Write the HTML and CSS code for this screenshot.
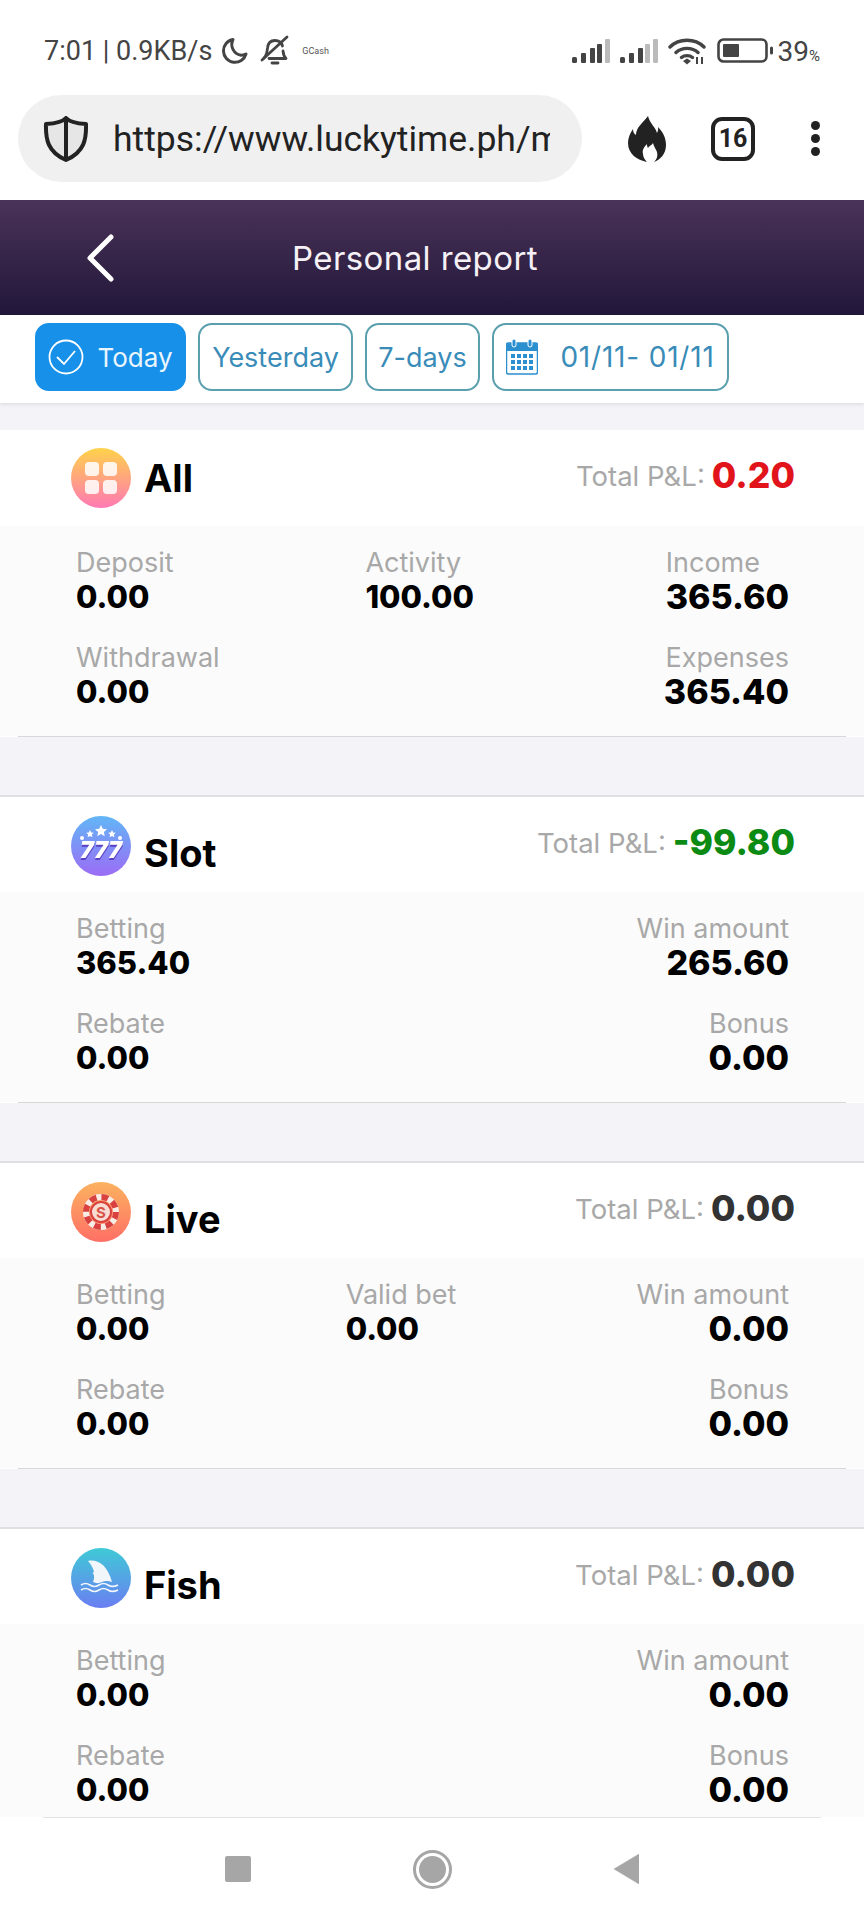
FILE: index.html
```html
<!DOCTYPE html>
<html>

<head>
    <meta charset="UTF-8" />
    <title>Personal report</title>
    <link rel="stylesheet" href="styles.css">
</head>

<body>
    <div class="statusbar">
        <div class="status-left">
            <span class="status-text">7:01 | 0.9KB/s</span>
            <svg class="moon" width="28" height="28" viewBox="0 0 28 28"><path d="M13 2.500a11.500 11.500 0 1 0 13 14.500c-2 1-3.500 1.300-5 1.300A11 11 0 0 1 13 2.500z" fill="none" stroke="#444" stroke-width="3" stroke-linejoin="round"/></svg>
            <svg class="bell" width="30" height="32" viewBox="0 0 30 32"><path d="M4 23c3-3 3-6 3.500-10C8 8 11 5.500 15 5.500s6.500 2 7.500 5.500M23 16c.3 3 1 5.500 3 7.500H9M12 28h6" fill="none" stroke="#444" stroke-width="2.800" stroke-linecap="round" stroke-linejoin="round"/><path d="M2 25L27 2" stroke="#444" stroke-width="2.800" stroke-linecap="round"/></svg>
            <span class="gcash">GCash</span>
        </div>
        <div class="status-right">
            <svg class="signal" width="38" height="24" viewBox="0 0 38 24"><rect x="0" y="18" width="5" height="6" rx="1.500" fill="#444"/><rect x="9" y="14" width="5" height="10" rx="1" fill="#444"/><rect x="18" y="9" width="5" height="15" rx="1" fill="#444"/><rect x="25" y="5" width="5" height="19" rx="1" fill="#444"/><rect x="33" y="0" width="5" height="24" rx="1" fill="#bbb"/></svg>
            <svg class="signal" width="38" height="24" viewBox="0 0 38 24"><rect x="0" y="18" width="5" height="6" rx="1.500" fill="#444"/><rect x="9" y="14" width="5" height="10" rx="1" fill="#444"/><rect x="18" y="9" width="5" height="15" rx="1" fill="#444"/><rect x="25" y="5" width="5" height="19" rx="1" fill="#bbb"/><rect x="33" y="0" width="5" height="24" rx="1" fill="#bbb"/></svg>
            <svg class="wifi" width="38" height="28" viewBox="0 0 38 28"><path d="M2 10C11 1 27 1 36 10M8 15.500c6-5.500 16-5.500 22 0M13.500 20.500c3-2.500 8-2.500 11 0" fill="none" stroke="#444" stroke-width="3.400" stroke-linecap="round"/><path d="M15 24l4-2.500 4 2.500-4 3.500z" fill="#444"/><path d="M29 20v7M34 20v7" stroke="#444" stroke-width="2"/></svg>
            <svg class="battery" width="60" height="26" viewBox="0 0 60 26"><rect x="1.500" y="1.500" width="48" height="22" rx="5" fill="none" stroke="#444" stroke-width="2.600"/><rect x="6" y="6" width="16" height="13" rx="1" fill="#444"/><rect x="53" y="8.500" width="3" height="8" rx="1.500" fill="#444"/></svg>
            <span class="status-text status-battery">39<span class="percent">%</span></span>
        </div>
    </div>

    <div class="browserbar">
        <div class="urlbox">
            <svg class="shield" width="46" height="46" viewBox="0 0 46 46"><path d="M23 2c3 3.500 10 5.500 20 6 .5 15-1.500 28-20 36C4.500 36 2.500 23 3 8c10-.5 17-2.500 20-6z" fill="#e6e6e6" stroke="#222" stroke-width="4" stroke-linejoin="round"/><path d="M23 3v40" stroke="#222" stroke-width="4"/></svg>
            <span class="url">https://www.luckytime.ph/m/report</span>
        </div>
        <svg class="flame" width="38" height="46" viewBox="0 0 38 46"><path d="M20 0c2 8 7 10 9 17 1-2 1.500-4 1-6 5 5 8 11 8 18 0 9-6 15-12 17 3-3 4-6 3-10-1-3-3-5-4-9-2 3-3 2-5 5-1-1-1-3-1-4-3 3-5 6-4 10 0 3 2 6 4 8C9 44 0 38 0 27c0-5 2-10 5-14 0 3 1 5 3 6C8 11 15 7 20 0z" fill="#222"/></svg>
        <div class="tabcount">16</div>
        <div class="menu-dots"><i></i><i></i><i></i></div>
    </div>

    <header class="topbar">
        <svg class="back" width="30" height="48" viewBox="0 0 30 48"><path d="M26 3L5 24l21 21" fill="none" stroke="#fff" stroke-width="5" stroke-linecap="round" stroke-linejoin="round"/></svg>
        <span class="topbar-title">Personal report</span>
    </header>

    <nav class="tabs">
        <div class="tab tab-today">
            <svg width="36" height="36" viewBox="0 0 36 36"><circle cx="18" cy="18" r="16.500" fill="none" stroke="#fff" stroke-width="1.800"/><path d="M9 18l7 7 11-13" fill="none" stroke="#fff" stroke-width="1.800"/></svg>
            <span>Today</span>
        </div>
        <div class="tab tab-yesterday">Yesterday</div>
        <div class="tab tab-week">7-days</div>
        <div class="tab tab-date">
            <svg width="32" height="36" viewBox="0 0 32 36"><rect x="0.500" y="4" width="31" height="31" rx="2" fill="#fff" stroke="#2b8fd0" stroke-width="1.500"/><path d="M1 6a2 2 0 0 1 2-2h26a2 2 0 0 1 2 2v6H1z" fill="#2b8fd0"/><rect x="6" y="0" width="4" height="8" rx="2" fill="#2b8fd0" stroke="#fff"/><rect x="22" y="0" width="4" height="8" rx="2" fill="#2b8fd0" stroke="#fff"/><g fill="#2b8fd0"><rect x="5" y="15" width="4" height="4"/><rect x="11" y="15" width="4" height="4"/><rect x="17" y="15" width="4" height="4"/><rect x="23" y="15" width="4" height="4"/><rect x="5" y="21" width="4" height="4"/><rect x="11" y="21" width="4" height="4"/><rect x="17" y="21" width="4" height="4"/><rect x="23" y="21" width="4" height="4"/><rect x="5" y="27" width="4" height="4"/><rect x="11" y="27" width="4" height="4"/><rect x="17" y="27" width="4" height="4"/><rect x="23" y="27" width="4" height="4"/></g></svg>
            <span>01/11- 01/11</span>
        </div>
    </nav>

    <main class="report">
        <section class="card card-first">
            <div class="card-head">
                <div class="card-name">
                    <svg class="game-icon" viewBox="0 0 60 60"><defs><linearGradient id="gAll" x1="0" y1="0" x2="0" y2="1"><stop offset="0" stop-color="#ffd24a"/><stop offset="1" stop-color="#ff79b4"/></linearGradient></defs><circle cx="30" cy="30" r="30" fill="url(#gAll)"/><rect x="14" y="14" width="14" height="14" rx="4" fill="#fff" opacity=".85"/><rect x="32" y="14" width="14" height="14" rx="4" fill="#fff" opacity=".85"/><rect x="14" y="32" width="14" height="14" rx="4" fill="#fff" opacity=".85"/><rect x="32" y="32" width="14" height="14" rx="4" fill="#fff" opacity=".85"/></svg>
                    <span class="card-title">All</span>
                </div>
                <div class="total"><span class="total-label">Total P&amp;L:</span> <span class="total-value red">0.20</span></div>
            </div>
            <div class="card-body">
                <div class="stat-row">
                    <div class="stat"><span>Deposit</span><b>0.00</b></div>
                    <div class="stat"><span>Activity</span><b>100.00</b></div>
                    <div class="stat stat-right stat-start"><span>Income</span><b>365.60</b></div>
                </div>
                <div class="stat-row">
                    <div class="stat"><span>Withdrawal</span><b>0.00</b></div>
                    <div class="stat stat-right"><span>Expenses</span><b>365.40</b></div>
                </div>
            </div>
        </section>

        <section class="card">
            <div class="card-head">
                <div class="card-name">
                    <svg class="game-icon" viewBox="0 0 60 60"><defs><linearGradient id="gSlot" x1="0" y1="0" x2="0" y2="1"><stop offset="0" stop-color="#62b6f6"/><stop offset="1" stop-color="#9c6cf6"/></linearGradient></defs><circle cx="30" cy="30" r="30" fill="url(#gSlot)"/><g fill="#fff"><path d="M30 9l1.800 3.800 4.200.5-3.100 2.800.8 4.100-3.700-2.100-3.700 2.100.8-4.100-3.100-2.800 4.200-.5z"/><path d="M19 14l1.200 2.400 2.600.4-1.900 1.800.5 2.600-2.400-1.300-2.400 1.300.5-2.600-1.900-1.800 2.600-.4z"/><path d="M41 14l1.200 2.400 2.600.4-1.900 1.800.5 2.600-2.400-1.300-2.400 1.300.5-2.600-1.900-1.800 2.600-.4z"/><circle cx="11" cy="22" r="2"/><circle cx="49" cy="22" r="2"/></g><text x="30" y="42" class="slot-digits">777</text></svg>
                    <span class="card-title card-title-low">Slot</span>
                </div>
                <div class="total"><span class="total-label">Total P&amp;L:</span> <span class="total-value green">-99.80</span></div>
            </div>
            <div class="card-body">
                <div class="stat-row">
                    <div class="stat"><span>Betting</span><b>365.40</b></div>
                    <div class="stat stat-right"><span>Win amount</span><b>265.60</b></div>
                </div>
                <div class="stat-row">
                    <div class="stat"><span>Rebate</span><b>0.00</b></div>
                    <div class="stat stat-right"><span>Bonus</span><b>0.00</b></div>
                </div>
            </div>
        </section>

        <section class="card">
            <div class="card-head">
                <div class="card-name">
                    <svg class="game-icon" viewBox="0 0 60 60"><defs><linearGradient id="gLive" x1="0" y1="0" x2="0" y2="1"><stop offset="0" stop-color="#fbb25f"/><stop offset="1" stop-color="#ff6f66"/></linearGradient></defs><circle cx="30" cy="30" r="30" fill="url(#gLive)"/><circle cx="30" cy="30" r="15" fill="none" stroke="#f8ece6" stroke-width="6"/><circle cx="30" cy="30" r="15" fill="none" stroke="#d8413f" stroke-width="6" stroke-dasharray="6.780 5"/><circle cx="30" cy="30" r="10" fill="#f8dcd2" stroke="#d8413f" stroke-width="2"/><text x="30" y="35.500" class="chip-letter">S</text></svg>
                    <span class="card-title card-title-low">Live</span>
                </div>
                <div class="total"><span class="total-label">Total P&amp;L:</span> <span class="total-value">0.00</span></div>
            </div>
            <div class="card-body">
                <div class="stat-row">
                    <div class="stat"><span>Betting</span><b>0.00</b></div>
                    <div class="stat"><span>Valid bet</span><b>0.00</b></div>
                    <div class="stat stat-right"><span>Win amount</span><b>0.00</b></div>
                </div>
                <div class="stat-row">
                    <div class="stat"><span>Rebate</span><b>0.00</b></div>
                    <div class="stat stat-right"><span>Bonus</span><b>0.00</b></div>
                </div>
            </div>
        </section>

        <section class="card">
            <div class="card-head">
                <div class="card-name">
                    <svg class="game-icon" viewBox="0 0 60 60"><defs><linearGradient id="gFish" x1="0" y1="0" x2="0" y2="1"><stop offset="0" stop-color="#3fcad6"/><stop offset="1" stop-color="#6a7ef2"/></linearGradient></defs><circle cx="30" cy="30" r="30" fill="url(#gFish)"/><path d="M17 13c9-2 19 3 24 21-4-1.500-7-1.500-10 0-3 1.500-6 1.500-9 0 2-5 1-8-.5-9L23 24c-1-4-3-8-6-11z" fill="#f1f6fb"/><path d="M10 37c3-2 6-2 9 0s6 2 9 0 6-2 9 0 6 2 10 0M10 42c3-2 6-2 9 0s6 2 9 0 6-2 9 0 6 2 10 0" fill="none" stroke="#f1f6fb" stroke-width="1.600"/></svg>
                    <span class="card-title card-title-low">Fish</span>
                </div>
                <div class="total"><span class="total-label">Total P&amp;L:</span> <span class="total-value">0.00</span></div>
            </div>
            <div class="card-body">
                <div class="stat-row">
                    <div class="stat"><span>Betting</span><b>0.00</b></div>
                    <div class="stat stat-right"><span>Win amount</span><b>0.00</b></div>
                </div>
                <div class="stat-row">
                    <div class="stat"><span>Rebate</span><b>0.00</b></div>
                    <div class="stat stat-right"><span>Bonus</span><b>0.00</b></div>
                </div>
            </div>
        </section>
    </main>

    <footer class="navbar">
        <div class="nav-square"></div>
        <div class="nav-home"><i></i></div>
        <svg width="25" height="30" viewBox="0 0 25 30"><path d="M25 0v30L0 15z" fill="#a6a6a6" stroke="#a6a6a6" stroke-width="0.500"/></svg>
    </footer>
</body>

</html>
```

FILE: styles.css
```css
* {
    box-sizing: border-box;
}

html,
body {
    margin: 0;
    padding: 0;
}

body {
    width: 864px;
    height: 1920px;
    overflow: hidden;
    background-color: #fff;
    font-family: Inter, "Liberation Sans", sans-serif;
}

/* phone status bar */
.statusbar {
    height: 95px;
    padding: 33px 44px 0 44px;
    display: flex;
    justify-content: space-between;
    align-items: flex-start;
    font-family: Roboto, sans-serif;
}

.status-left,
.status-right {
    display: flex;
    align-items: center;
    height: 36px;
}

.status-text {
    font-size: 27px;
    color: #444;
    white-space: nowrap;
}

.status-battery {
    font-size: 28px;
}

.moon {
    margin-left: 8px;
}

.bell {
    margin-left: 12px;
}

.gcash {
    margin-left: 12px;
    font-size: 9px;
    color: #555;
}

.signal {
    margin-right: 10px;
}

.wifi {
    margin-right: 11px;
}

.battery {
    margin-right: 1px;
}

.percent {
    font-size: 15px;
}

/* browser url bar */
.browserbar {
    height: 105px;
    padding: 0 0 18px 18px;
    display: flex;
    align-items: center;
    font-family: Roboto, sans-serif;
}

.urlbox {
    width: 564px;
    height: 87px;
    padding: 0 32px 0 25px;
    border-radius: 44px;
    background-color: #f0f0f0;
    display: flex;
    align-items: center;
    gap: 24px;
    overflow: hidden;
}

.shield {
    flex-shrink: 0;
}

.url {
    font-size: 35.5px;
    color: #222;
    white-space: nowrap;
    overflow: hidden;
}

.flame {
    margin-left: 46px;
}

.tabcount {
    margin-left: 45px;
    width: 44px;
    height: 44px;
    border: 4px solid #222;
    border-radius: 11px;
    display: flex;
    align-items: center;
    justify-content: center;
    font-size: 25px;
    font-weight: bold;
    color: #222;
}

.menu-dots {
    margin-left: 56px;
    display: flex;
    flex-direction: column;
    gap: 4px;
}

.menu-dots i {
    display: block;
    width: 9px;
    height: 9px;
    border-radius: 50%;
    background-color: #222;
}

/* page header */
.topbar {
    height: 115px;
    padding-left: 85px;
    display: flex;
    align-items: center;
    background: linear-gradient(#4a3358, #21173a);
}

.topbar-title {
    margin-left: 177px;
    font-size: 33px;
    letter-spacing: 0.4px;
    color: #f6f1f6;
}

/* date filter */
.tabs {
    height: 88px;
    padding: 8px 0 0 35px;
    display: flex;
    align-items: flex-start;
    gap: 12px;
    background-color: #fff;
    box-shadow: 0 2px 3px rgba(0, 0, 0, 0.08);
    position: relative;
}

.tab {
    height: 68px;
    border: 2px solid #5a9fae;
    border-radius: 14px;
    display: flex;
    align-items: center;
    justify-content: center;
    font-size: 27px;
    color: #3a8cb8;
}

.tab-today {
    width: 151px;
    gap: 13px;
    font-size: 26px;
    background-color: #1690e8;
    border-color: #1690e8;
    color: #eaf5fd;
}

.tab-yesterday {
    width: 155px;
}

.tab-week {
    width: 115px;
}

.tab-date {
    width: 237px;
    gap: 22px;
    font-size: 28px;
    letter-spacing: 0.8px;
}

/* report list */
.report {
    height: 1414px;
    padding-top: 27px;
    overflow: hidden;
    background-color: #f4f4f8;
}

.card {
    margin-bottom: 58px;
    border-top: 2px solid #e0e0e4;
    background-color: #fff;
}

.card-first {
    border-top: none;
}

.card-head {
    height: 95px;
    padding: 18px 69px 0 71px;
    display: flex;
    justify-content: space-between;
    align-items: flex-start;
}

.card-first .card-head {
    height: 96px;
}

.card-name {
    display: flex;
    align-items: center;
    gap: 13px;
}

.game-icon {
    width: 60px;
    height: 60px;
}

.card-title {
    font-size: 38px;
    font-weight: 700;
    color: #000;
}

.card-title-low {
    padding-top: 15px;
}

.total {
    padding-top: 6px;
    display: flex;
    align-items: center;
    gap: 7px;
}

.total-label {
    font-size: 27.5px;
    color: #a8a8a8;
}

.total-value {
    font-size: 35.5px;
    font-weight: 800;
    color: #333;
}

.red {
    color: #e0141a;
}

.green {
    color: #0b8a14;
}

.card-body {
    padding: 20px 75px 27px 76px;
    display: flex;
    flex-direction: column;
    gap: 27px;
    background-color: #fbfbfb;
}

/* the divider stops short of the screen edges */
.card::after {
    content: "";
    display: block;
    height: 1px;
    margin: 0 18px;
    background-color: #d8d8d8;
}

.stat-row {
    display: flex;
    justify-content: space-between;
}

.stat {
    display: flex;
    flex-direction: column;
}

.stat span {
    font-size: 27px;
    line-height: 34px;
    color: #a8a8a8;
}

.stat b {
    font-size: 31px;
    line-height: 34px;
    font-weight: 800;
    color: #000;
}

.stat-right {
    align-items: flex-end;
}

.stat-start {
    align-items: flex-start;
}

.stat-right b {
    font-size: 34px;
}

.slot-digits {
    font-size: 23px;
    font-weight: 900;
    font-style: italic;
    fill: #fff;
    text-anchor: middle;
    filter: drop-shadow(0 2px 0 #5b3fc4);
}

.chip-letter {
    font-size: 15px;
    font-weight: 700;
    fill: #d8524a;
    text-anchor: middle;
}

/* android buttons */
.navbar {
    height: 103px;
    margin: 0 43px;
    border-top: 1px solid #e2e2e2;
    display: flex;
    justify-content: center;
    align-items: center;
    gap: 162px;
    background-color: #fff;
}

.nav-square {
    width: 26px;
    height: 26px;
    border-radius: 2px;
    background-color: #a6a6a6;
}

.nav-home {
    width: 39px;
    height: 39px;
    border: 3px solid #a6a6a6;
    border-radius: 50%;
    padding: 3px;
}

.nav-home i {
    display: block;
    width: 100%;
    height: 100%;
    border-radius: 50%;
    background-color: #a6a6a6;
}
```
